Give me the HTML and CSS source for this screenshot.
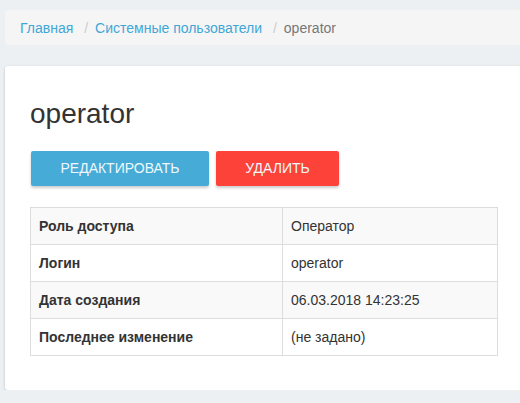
FILE: index.html
```html
<!DOCTYPE html>
<html lang="ru">
<head>
    <meta charset="UTF-8">
    <title>operator</title>
    <link rel="stylesheet" href="styles.css">
</head>
<body>
<div class="page">
    <ul class="breadcrumb">
        <li><a href="#">Главная</a></li>
        <li><a href="#">Системные пользователи</a></li>
        <li class="active">operator</li>
    </ul>

    <div class="box">
        <h1 class="box-title">operator</h1>

        <div class="actions">
            <a href="#" class="btn btn-info">Редактировать</a>
            <a href="#" class="btn btn-danger">Удалить</a>
        </div>

        <table class="detail-view">
            <tr>
                <th>Роль доступа</th>
                <td>Оператор</td>
            </tr>
            <tr>
                <th>Логин</th>
                <td>operator</td>
            </tr>
            <tr>
                <th>Дата создания</th>
                <td>06.03.2018 14:23:25</td>
            </tr>
            <tr>
                <th>Последнее изменение</th>
                <td>(не задано)</td>
            </tr>
        </table>
    </div>
</div>
</body>
</html>
```

FILE: styles.css
```css
* {
    box-sizing: border-box;
    margin: 0;
    padding: 0;
}

body {
    background-color: #ecf0f3;
    font-family: "Liberation Sans", Arial, Helvetica, sans-serif;
    font-size: 14px;
    line-height: 20px;
    color: #333;
    overflow: hidden;
}

.page {
    width: 540px;
    padding: 10px 0 0 5px;
}

.breadcrumb {
    list-style: none;
    background-color: #f5f5f5;
    border-radius: 4px;
    padding: 8px 15px 7px;
    margin-bottom: 21px;
    font-size: 14px;
}

.breadcrumb li {
    display: inline-block;
}

.breadcrumb li + li:before {
    content: "/";
    padding: 0 7px;
    color: #ccc;
}

.breadcrumb a {
    color: #3fa7d8;
    text-decoration: none;
}

.breadcrumb .active {
    color: #777;
}

.box {
    background-color: #fff;
    border-radius: 3px;
    box-shadow: 0 1px 3px rgba(0, 0, 0, 0.2);
    padding: 31px 25px 34px;
    height: 324px;
}

.box-title {
    font-size: 28px;
    font-weight: normal;
    line-height: 34px;
    color: #333;
    margin-bottom: 20px;
}

.actions {
    display: flex;
    gap: 7px;
    margin-bottom: 21px;
    padding-left: 1px;
}

.btn {
    display: inline-block;
    height: 35px;
    line-height: 35px;
    font-size: 14px;
    text-align: center;
    text-transform: uppercase;
    text-decoration: none;
    color: #eef7fb;
    border-radius: 2px;
    box-shadow: 0 2px 3px rgba(0, 0, 0, 0.2);
}

.btn-info {
    background-color: #46abd6;
    width: 178px;
}

.btn-danger {
    background-color: #fd4339;
    width: 123px;
}

.detail-view {
    width: 468px;
    border-collapse: collapse;
}

.detail-view th,
.detail-view td {
    border: 1px solid #ddd;
    padding: 8px;
    text-align: left;
    height: 37px;
}

.detail-view th {
    width: 252px;
    font-weight: bold;
}

.detail-view tr:nth-child(odd) {
    background-color: #f9f9f9;
}
```
